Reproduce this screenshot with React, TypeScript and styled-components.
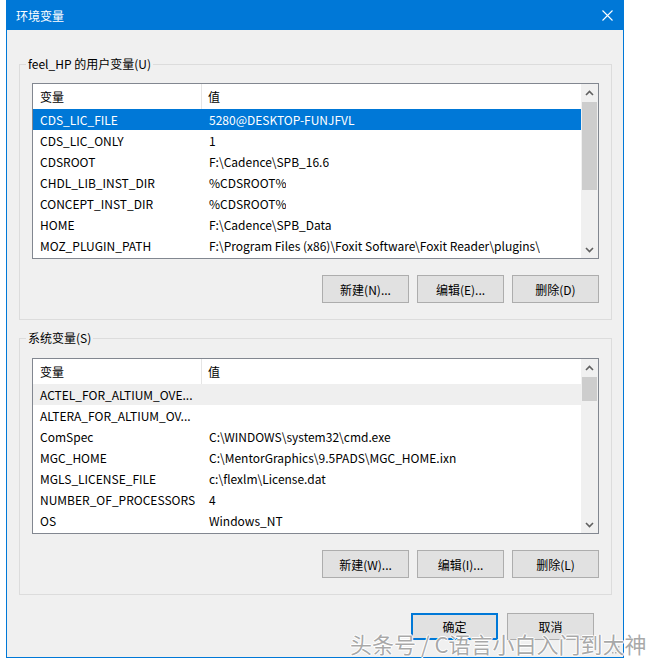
import React from "react";
import styled, { createGlobalStyle } from "styled-components";

const GlobalStyle = createGlobalStyle`
  html, body {
    margin: 0;
    padding: 0;
    background: #ffffff;
  }
  body {
    font-family: "Noto Sans CJK SC", "Liberation Sans", sans-serif;
    font-size: 12px;
    color: #000000;
  }
`;

type Tone = "selected" | "inactive" | "plain";

interface EnvVar {
  name: string;
  value: string;
  tone?: Tone;
}

const userVars: EnvVar[] = [
  { name: "CDS_LIC_FILE", value: "5280@DESKTOP-FUNJFVL", tone: "selected" },
  { name: "CDS_LIC_ONLY", value: "1" },
  { name: "CDSROOT", value: "F:\\Cadence\\SPB_16.6" },
  { name: "CHDL_LIB_INST_DIR", value: "%CDSROOT%" },
  { name: "CONCEPT_INST_DIR", value: "%CDSROOT%" },
  { name: "HOME", value: "F:\\Cadence\\SPB_Data" },
  {
    name: "MOZ_PLUGIN_PATH",
    value: "F:\\Program Files (x86)\\Foxit Software\\Foxit Reader\\plugins\\",
  },
];

const systemVars: EnvVar[] = [
  { name: "ACTEL_FOR_ALTIUM_OVE...", value: "", tone: "inactive" },
  { name: "ALTERA_FOR_ALTIUM_OV...", value: "" },
  { name: "ComSpec", value: "C:\\WINDOWS\\system32\\cmd.exe" },
  { name: "MGC_HOME", value: "C:\\MentorGraphics\\9.5PADS\\MGC_HOME.ixn" },
  { name: "MGLS_LICENSE_FILE", value: "c:\\flexlm\\License.dat" },
  { name: "NUMBER_OF_PROCESSORS", value: "4" },
  { name: "OS", value: "Windows_NT" },
];

const Page = styled.div`
  position: relative;
  width: 649px;
  height: 660px;
  overflow: hidden;
  background: #ffffff;
`;

const Window = styled.div`
  position: relative;
  margin-left: 6px;
  width: 618px;
  height: 658px;
  box-sizing: border-box;
  border: 1px solid #0078d7;
  border-top: none;
  background: #f0f0f0;
`;

const TitleBar = styled.div`
  height: 30px;
  background: #0078d7;
  color: #ffffff;
  display: flex;
  align-items: center;
  justify-content: space-between;
  padding: 0 10px 0 9px;
  font-size: 12px;
`;

const Body = styled.div`
  padding: 26px 11px 0 12px;
`;

const Group = styled.fieldset<{ $padTop: number; $gapTop?: number }>`
  margin: ${(p) => p.$gapTop ?? 0}px 0 0 0;
  padding: ${(p) => p.$padTop}px 12px 16px 12px;
  width: 593px;
  min-width: 0;
  box-sizing: border-box;
  border: 1px solid #dcdcdc;
`;

const Legend = styled.legend`
  margin-left: -6px;
  padding: 0 2px;
  line-height: 16px;
  font-size: 12px;
`;

const ListView = styled.div`
  width: 567px;
  height: 176px;
  box-sizing: border-box;
  border: 1px solid #828790;
  background: #ffffff;
  display: grid;
  grid-template-columns: 1fr 17px;
  overflow: hidden;
`;

const Columns = styled.div`
  overflow: hidden;
`;

const Header = styled.div`
  display: flex;
  height: 25px;
  align-items: stretch;
`;

const HeadCell = styled.div<{ $first?: boolean }>`
  display: flex;
  align-items: center;
  box-sizing: border-box;
  width: ${(p) => (p.$first ? "169px" : "auto")};
  padding-left: ${(p) => (p.$first ? 7 : 6)}px;
  border-right: ${(p) => (p.$first ? "1px solid #e5e5e5" : "none")};
`;

const Row = styled.div<{ $tone: Tone }>`
  display: flex;
  height: 21px;
  line-height: 21px;
  white-space: nowrap;
  background: ${(p) =>
    p.$tone === "selected" ? "#0078d7" : p.$tone === "inactive" ? "#efefef" : "transparent"};
  color: ${(p) => (p.$tone === "selected" ? "#ffffff" : "#000000")};
`;

const NameCell = styled.div`
  width: 169px;
  flex-shrink: 0;
  box-sizing: border-box;
  padding-left: 7px;
  overflow: hidden;
`;

const ValueCell = styled.div`
  padding-left: 7px;
  overflow: hidden;
`;

const ScrollBar = styled.div`
  display: flex;
  flex-direction: column;
  background: #f0f0f0;
`;

const ArrowButton = styled.div`
  height: 17px;
  display: flex;
  align-items: center;
  justify-content: center;
  flex-shrink: 0;
`;

const Track = styled.div`
  flex: 1;
  padding-top: 1px;
`;

const Thumb = styled.div<{ $height: number }>`
  height: ${(p) => p.$height}px;
  margin: 0 1px;
  background: #cdcdcd;
`;

const ButtonRow = styled.div`
  display: flex;
  justify-content: flex-end;
  gap: 8px;
  margin-top: 16px;
`;

const Button = styled.button<{ $default?: boolean; $h?: number }>`
  width: 87px;
  height: ${(p) => p.$h ?? 28}px;
  margin: 0;
  padding: 0;
  box-sizing: border-box;
  background: #e1e1e1;
  border: ${(p) => (p.$default ? "2px solid #0078d7" : "1px solid #adadad")};
  font-family: "Noto Sans CJK SC", "Liberation Sans", sans-serif;
  font-size: 12px;
  color: #000000;
`;

const Footer = styled.div`
  display: flex;
  justify-content: flex-end;
  gap: 9px;
  margin-top: 18px;
  padding-right: 18px;
`;

const Watermark = styled.div`
  position: absolute;
  left: 350px;
  top: 629px;
  font-family: "Noto Sans CJK SC", sans-serif;
  font-size: 22px;
  line-height: 28px;
  white-space: nowrap;
  color: rgba(140, 140, 140, 0.75);
  text-shadow: 1px 0 0 #fff, -1px 0 0 #fff, 0 1px 0 #fff, 0 -1px 0 #fff;
  pointer-events: none;
`;

const Grip = styled.svg`
  position: absolute;
  right: 3px;
  bottom: 3px;
`;

const Chevron: React.FC<{ down?: boolean }> = ({ down }) => (
  <svg width="9" height="6" viewBox="0 0 9 6">
    <polyline
      points={down ? "1,1 4.5,4.5 8,1" : "1,5 4.5,1.5 8,5"}
      fill="none"
      stroke="#606060"
      strokeWidth="1.6"
    />
  </svg>
);

const VarList: React.FC<{ rows: EnvVar[]; thumb: number }> = ({ rows, thumb }) => (
  <ListView>
    <Columns>
      <Header>
        <HeadCell $first>变量</HeadCell>
        <HeadCell>值</HeadCell>
      </Header>
      {rows.map((r) => (
        <Row key={r.name} $tone={r.tone ?? "plain"}>
          <NameCell>{r.name}</NameCell>
          <ValueCell>{r.value}</ValueCell>
        </Row>
      ))}
    </Columns>
    <ScrollBar>
      <ArrowButton>
        <Chevron />
      </ArrowButton>
      <Track>
        <Thumb $height={thumb} />
      </Track>
      <ArrowButton>
        <Chevron down />
      </ArrowButton>
    </ScrollBar>
  </ListView>
);

export default function App() {
  return (
    <Page>
      <GlobalStyle />
      <Window>
        <TitleBar>
          <span>环境变量</span>
          <svg width="11" height="11" viewBox="0 0 11 11">
            <path d="M0.5 0.5 L10.5 10.5 M10.5 0.5 L0.5 10.5" stroke="#ffffff" strokeWidth="1.1" />
          </svg>
        </TitleBar>
        <Body>
          <Group $padTop={11}>
            <Legend>feel_HP 的用户变量(U)</Legend>
            <VarList rows={userVars} thumb={88} />
            <ButtonRow>
              <Button>新建(N)...</Button>
              <Button>编辑(E)...</Button>
              <Button>删除(D)</Button>
            </ButtonRow>
          </Group>
          <Group $padTop={12} $gapTop={10}>
            <Legend>系统变量(S)</Legend>
            <VarList rows={systemVars} thumb={24} />
            <ButtonRow>
              <Button>新建(W)...</Button>
              <Button>编辑(I)...</Button>
              <Button>删除(L)</Button>
            </ButtonRow>
          </Group>
          <Footer>
            <Button $default $h={27}>
              确定
            </Button>
            <Button $h={27}>取消</Button>
          </Footer>
        </Body>
        <Grip width="10" height="10" viewBox="0 0 10 10">
          <g fill="#b0b0b0">
            <rect x="8" y="2" width="1.5" height="1.5" />
            <rect x="5" y="5" width="1.5" height="1.5" />
            <rect x="8" y="5" width="1.5" height="1.5" />
            <rect x="2" y="8" width="1.5" height="1.5" />
            <rect x="5" y="8" width="1.5" height="1.5" />
            <rect x="8" y="8" width="1.5" height="1.5" />
          </g>
        </Grip>
      </Window>
      <Watermark>头条号 / C语言小白入门到大神</Watermark>
    </Page>
  );
}
